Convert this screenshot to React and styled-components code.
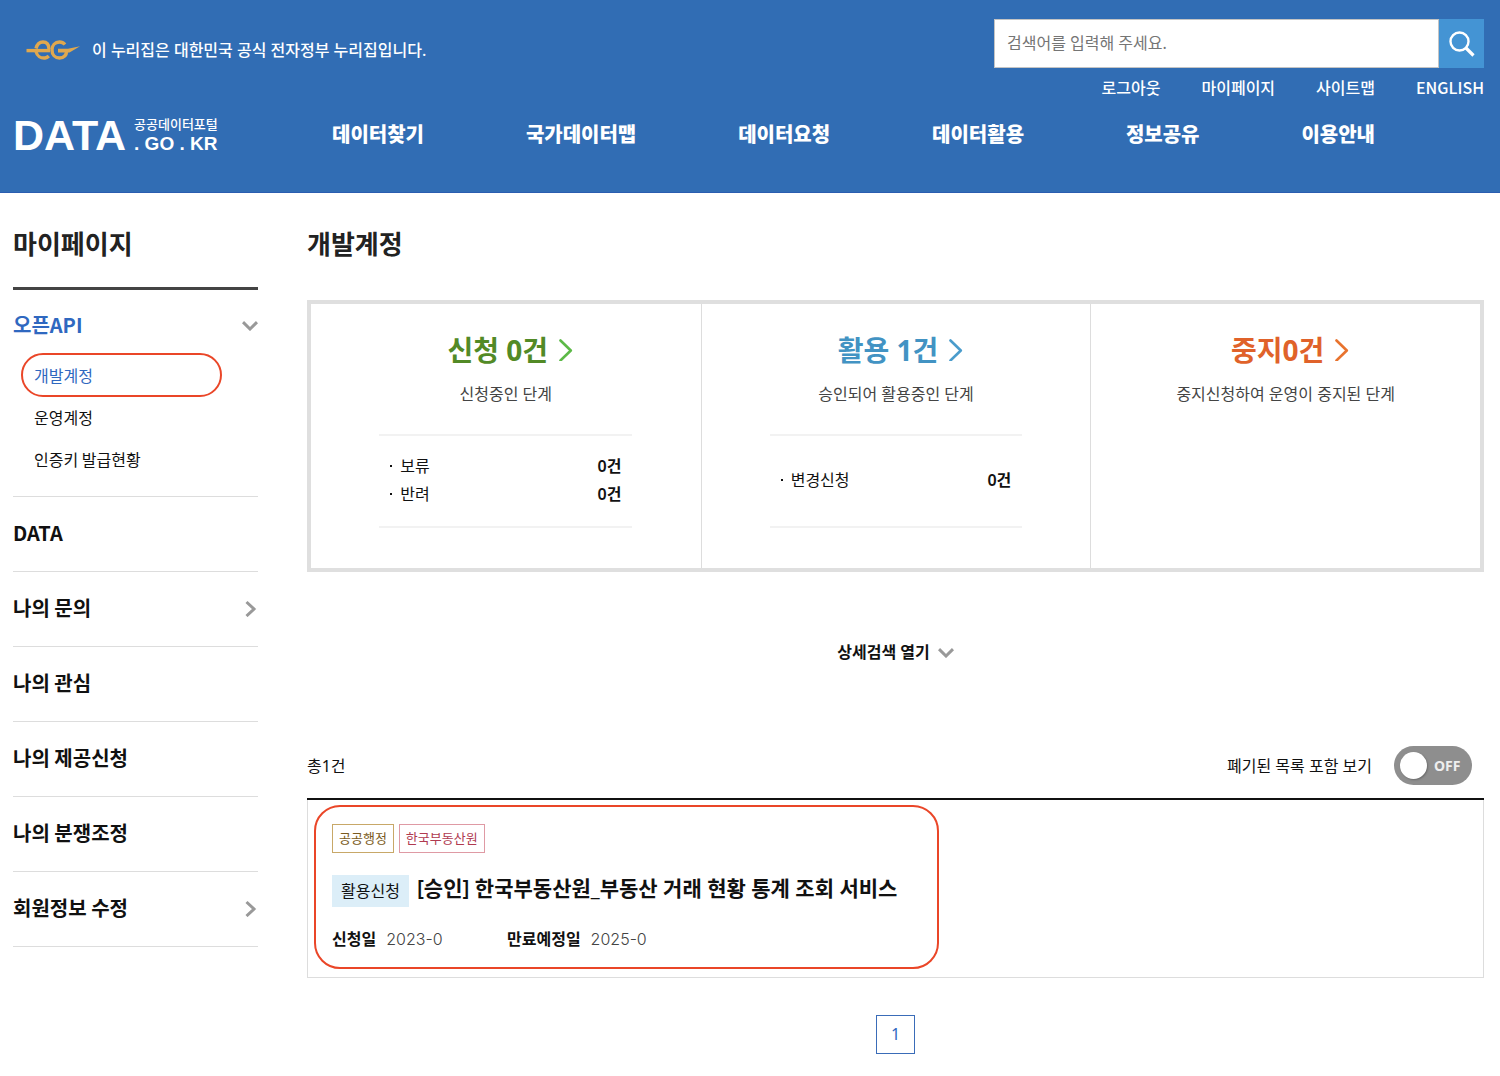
import styled, { createGlobalStyle } from 'styled-components';

const GlobalStyle = createGlobalStyle`
	* {
		box-sizing: border-box;
	}

	body {
		margin: 0;
		background-color: white;
		color: #111;
		font-family: 'Noto Sans', 'Noto Sans CJK KR', sans-serif;
		font-size: 16px;
		line-height: 24px;
	}

	h1, h2, h3, p, ul, dl, dd {
		margin: 0;
		padding: 0;
	}

	ul {
		list-style: none;
	}

	a {
		color: inherit;
		text-decoration: none;
	}

	button, input {
		font: inherit;
	}
`;

const App = () => {
	return (
		<>
			<GlobalStyle />
			<Header />
			<Page>
				<Sidebar />
				<Main />
			</Page>
		</>
	);
};

export default App;

/************************************************************* ICONS ****************************************************************************/

const ChevronRight = () => (
	<svg width='14' height='22' viewBox='0 0 14 22' fill='none' aria-hidden='true'>
		<path
			d='M1.5 1.500 L11.8 11.500 L1.5 21.500'
			stroke='currentColor'
			strokeWidth='2.6'
			strokeLinecap='round'
			strokeLinejoin='round'
		/>
	</svg>
);

const MenuArrow = () => (
	<svg width='13' height='18' viewBox='0 0 13 18' fill='none' aria-hidden='true'>
		<path d='M1.5 3 L9 10 L1.5 17' stroke='currentColor' strokeWidth='3' />
	</svg>
);

const ChevronDown = () => (
	<svg width='16' height='12' viewBox='0 0 16 12' fill='none' aria-hidden='true'>
		<path d='M1 3.2 L8 10 L15 3.2' stroke='currentColor' strokeWidth='3' />
	</svg>
);

const SearchIcon = () => (
	<svg width='26' height='26' viewBox='0 0 26 26' fill='none' aria-hidden='true'>
		<circle cx='10.5' cy='10.5' r='9' stroke='white' strokeWidth='2.4' />
		<path d='M17 17 L24.500 24.500' stroke='white' strokeWidth='3.2' />
	</svg>
);

const GovMark = () => (
	<svg width='54' height='20' viewBox='0 0 54 20' fill='none' aria-hidden='true'>
		<g stroke='#e0a84e' strokeWidth='3.4'>
			<path d='M0.5 10.6 H24' />
			<path d='M10 8.500 C11 4.500 13.500 2 17 2 C20.500 2 22.800 4 23 9' />
			<path d='M10 11.500 C11 16 15 18.400 19 18 C20.600 17.800 21.800 17 22.800 16' />
			<path d='M39 4.500 C37.500 2.800 35.500 2 33.500 2 C29 2 26 5.500 26 10 C26 14.500 29 18 33.500 18 C38 18 40.500 15 40.800 10.400' />
		</g>
		<path d='M32 8.800 H42 L54 6.200 L43.500 12.400 H32 Z' fill='#e0a84e' />
	</svg>
);

/************************************************************* HEADER ****************************************************************************/

const utilLinks = ['로그아웃', '마이페이지', '사이트맵', 'ENGLISH'];
const navLinks = ['데이터찾기', '국가데이터맵', '데이터요청', '데이터활용', '정보공유', '이용안내'];

const Header = () => {
	return (
		<HeaderBar>
			<HeaderTop>
				<GovNotice>
					<GovMark />
					이 누리집은 대한민국 공식 전자정부 누리집입니다.
				</GovNotice>
				<HeaderTools>
					<SearchForm onSubmit={(e) => e.preventDefault()}>
						<input type='text' aria-label='검색어' placeholder='검색어를 입력해 주세요.' />
						<button type='submit' aria-label='검색'>
							<SearchIcon />
						</button>
					</SearchForm>
					<UtilList>
						{utilLinks.map((link) => (
							<li key={link}>
								<a href='#'>{link}</a>
							</li>
						))}
					</UtilList>
				</HeaderTools>
			</HeaderTop>
			<HeaderBottom>
				<Logo href='#'>
					<span className='name'>DATA</span>
					<span className='side'>
						<span className='portal'>공공데이터포털</span>
						<span className='domain'>. GO . KR</span>
					</span>
				</Logo>
				<Nav>
					{navLinks.map((link) => (
						<a key={link} href='#'>
							{link}
						</a>
					))}
				</Nav>
			</HeaderBottom>
		</HeaderBar>
	);
};

const HeaderBar = styled.header`
	padding: 19px 16px 28px 13px;
	background-color: #316db4;
	border-bottom: 1px solid #2a5db0;
	color: white;
`;

const HeaderTop = styled.div`
	display: flex;
	justify-content: space-between;
`;

const GovNotice = styled.p`
	display: flex;
	align-items: center;
	gap: 12px;
	height: 62px;
	padding-left: 13px;
	font-weight: 500;
`;

const HeaderTools = styled.div`
	width: 33%;
	min-width: 490px;
`;

const SearchForm = styled.form`
	display: flex;
	height: 49px;

	& > input {
		flex: 1;
		min-width: 0;
		padding: 0 12px 2px;
		border: 1px solid #c4c4c4;
		border-radius: 0;
		background-color: white;
		outline: none;

		&::placeholder {
			color: #757575;
			opacity: 1;
		}
	}

	& > button {
		display: flex;
		align-items: center;
		justify-content: center;
		width: 45px;
		padding: 0;
		border: none;
		background-color: #4494d4;
		cursor: pointer;
	}
`;

const UtilList = styled.ul`
	display: flex;
	justify-content: flex-end;
	gap: 41px;
	font-family: 'Noto Sans CJK KR', sans-serif;
	line-height: 38px;
	font-weight: 500;
`;

const HeaderBottom = styled.div`
	display: flex;
	align-items: center;
	height: 58px;
`;

const Logo = styled.a`
	display: flex;
	align-items: center;
	gap: 8px;
	width: 319px;
	font-family: 'Liberation Sans', 'Noto Sans CJK KR', sans-serif;
	font-weight: 700;

	& > .name {
		font-size: 43px;
		line-height: 48px;
	}

	& > .side {
		display: flex;
		flex-direction: column;
	}

	& .portal {
		font-size: 13px;
		line-height: 18px;
		font-weight: 500;
	}

	& .domain {
		font-size: 19px;
		line-height: 20px;
	}
`;

const Nav = styled.nav`
	display: flex;
	flex: 1;
	justify-content: space-between;
	padding-right: 109px;
	font-size: 20px;
	font-weight: 800;
`;

/************************************************************* SIDEBAR ****************************************************************************/

const Page = styled.div`
	display: flex;
	gap: 49px;
	padding: 31px 16px 22px 13px;
`;

const menuItems = [
	{ label: 'DATA' },
	{ label: '나의 문의', arrow: true },
	{ label: '나의 관심' },
	{ label: '나의 제공신청' },
	{ label: '나의 분쟁조정' },
	{ label: '회원정보 수정', arrow: true },
];

const Sidebar = () => {
	return (
		<SidebarBox>
			<PageTitle as='h2'>마이페이지</PageTitle>
			<Menu>
				<OpenGroup>
					<a className='head' href='#'>
						오픈API
						<ChevronDown />
					</a>
					<ul>
						<SubItem $active>
							<a href='#'>개발계정</a>
						</SubItem>
						<SubItem>
							<a href='#'>운영계정</a>
						</SubItem>
						<SubItem>
							<a href='#'>인증키 발급현황</a>
						</SubItem>
					</ul>
				</OpenGroup>
				{menuItems.map(({ label, arrow }) => (
					<MenuItem key={label}>
						<a href='#'>
							{label}
							{arrow && <MenuArrow />}
						</a>
					</MenuItem>
				))}
			</Menu>
		</SidebarBox>
	);
};

const SidebarBox = styled.aside`
	flex: none;
	width: 245px;
`;

const PageTitle = styled.h1`
	color: #222;
	font-size: 26px;
	font-weight: 700;
	line-height: 40px;
`;

const Menu = styled.ul`
	margin-top: 23px;
	border-top: 3px solid #444;
	font-family: 'Noto Sans CJK KR', sans-serif;
	font-size: 20px;
	font-weight: 600;

	& svg {
		color: #999;
	}
`;

const OpenGroup = styled.li`
	padding-bottom: 16px;
	border-bottom: 1px solid #ddd;

	& > .head {
		display: flex;
		align-items: center;
		justify-content: space-between;
		padding: 20px 0 14px;
		color: #2f68c0;
		line-height: 30px;
	}
`;

const SubItem = styled.li`
	position: relative;
	padding-left: 21px;
	color: ${({ $active }) => ($active ? '#2f68c0' : '#111')};
	font-size: 16px;
	font-weight: 400;
	line-height: 42px;

	&::after {
		content: '';
		display: ${({ $active }) => ($active ? 'block' : 'none')};
		position: absolute;
		inset: -1px 36px -1px 8px;
		border: 2px solid #ea4628;
		border-radius: 22px;
		pointer-events: none;
	}
`;

const MenuItem = styled.li`
	border-bottom: 1px solid #ddd;

	& > a {
		display: flex;
		align-items: center;
		justify-content: space-between;
		height: 74px;
		padding-bottom: 2px;
	}
`;

/************************************************************* MAIN ****************************************************************************/

const summary = [
	{
		title: '신청 0건',
		color: '#528a26',
		arrow: '#5cb947',
		text: '신청중인 단계',
		rows: ['보류', '반려'],
	},
	{
		title: '활용 1건',
		color: '#4293c3',
		arrow: '#4a9ccc',
		text: '승인되어 활용중인 단계',
		rows: ['변경신청'],
	},
	{
		title: '중지0건',
		color: '#e0622a',
		arrow: '#e8732e',
		text: '중지신청하여 운영이 중지된 단계',
		rows: [],
	},
];

const Main = () => {
	return (
		<MainBox>
			<PageTitle>개발계정</PageTitle>
			<Summary>
				{summary.map(({ title, color, arrow, text, rows }) => (
					<SummaryCell key={title}>
						<SummaryLink href='#' $color={color} $arrow={arrow}>
							{title}
							<ChevronRight />
						</SummaryLink>
						<p>{text}</p>
						{rows.length > 0 && (
							<SummaryRows>
								{rows.map((row) => (
									<li key={row}>
										<span>{row}</span>
										<strong>0건</strong>
									</li>
								))}
							</SummaryRows>
						)}
					</SummaryCell>
				))}
			</Summary>
			<DetailButton type='button'>
				상세검색 열기
				<ChevronDown />
			</DetailButton>
			<ListHead>
				<p>총1건</p>
				<Toggle>
					폐기된 목록 포함 보기
					<input type='checkbox' />
					<span className='switch'>OFF</span>
				</Toggle>
			</ListHead>
			<ListItem>
				<ItemBody>
					<Tags>
						<Tag $color='#7a5a20' $border='#c8a868'>
							공공행정
						</Tag>
						<Tag $color='#b03a50' $border='#df9aa4'>
							한국부동산원
						</Tag>
					</Tags>
					<ItemTitle href='#'>
						<span>활용신청</span>
						<h3>[승인] 한국부동산원_부동산 거래 현황 통계 조회 서비스</h3>
					</ItemTitle>
					<Dates>
						<div>
							<dt>신청일</dt>
							<dd>2023-0</dd>
						</div>
						<div>
							<dt>만료예정일</dt>
							<dd>2025-0</dd>
						</div>
					</Dates>
				</ItemBody>
			</ListItem>
			<Pagination aria-label='페이지'>
				<a href='#' aria-current='page'>
					1
				</a>
			</Pagination>
		</MainBox>
	);
};

const MainBox = styled.main`
	display: flex;
	flex: 1;
	flex-direction: column;
	min-width: 0;
`;

const Summary = styled.section`
	display: grid;
	grid-template-columns: repeat(3, 1fr);
	margin-top: 36px;
	border: 4px solid #dfdfdf;
`;

const SummaryCell = styled.div`
	display: flex;
	flex-direction: column;
	align-items: center;
	min-height: 264px;
	padding: 26px 0 40px;

	& + & {
		border-left: 1px solid #ddd;
	}

	& > p {
		margin-top: 12px;
		color: #444;
	}
`;

const SummaryLink = styled.a`
	display: flex;
	align-items: center;
	gap: 11px;
	padding-left: 9px;
	color: ${({ $color }) => $color};
	font-size: 28px;
	font-weight: 700;
	line-height: 40px;

	& > svg {
		color: ${({ $arrow }) => $arrow};
	}
`;

const SummaryRows = styled.ul`
	display: flex;
	flex-direction: column;
	justify-content: center;
	width: 65%;
	height: 94px;
	margin-top: 28px;
	padding: 0 11px 3px;
	border: solid #f2f2f2;
	border-width: 2px 0;
	line-height: 28px;

	& > li {
		display: flex;
		align-items: center;
		gap: 8px;
	}

	& > li::before {
		content: '';
		width: 2px;
		height: 2px;
		background-color: #111;
	}

	& strong {
		margin-left: auto;
		font-weight: 600;
	}
`;

const DetailButton = styled.button`
	display: flex;
	align-items: center;
	align-self: center;
	gap: 8px;
	margin: 68px 0 82px;
	padding: 0;
	border: none;
	background: none;
	color: #111;
	font-weight: 600;
	cursor: pointer;

	& > svg {
		color: #999;
	}
`;

const ListHead = styled.div`
	display: flex;
	align-items: center;
	justify-content: space-between;
	padding: 0 12px 13px 0;
	border-bottom: 2px solid #111;
`;

const Toggle = styled.label`
	display: flex;
	align-items: center;
	cursor: pointer;

	& > input {
		position: absolute;
		opacity: 0;
	}

	& > .switch {
		display: flex;
		align-items: center;
		gap: 7px;
		width: 78px;
		height: 39px;
		margin-left: 22px;
		padding-left: 6px;
		border-radius: 20px;
		background-color: #8e8e8e;
		color: #eee;
		font-size: 14px;
		font-weight: 700;
	}

	& > .switch::before {
		content: '';
		width: 27px;
		height: 27px;
		border-radius: 50%;
		background-color: white;
		box-shadow: 1px 1px 2px rgba(0, 0, 0, 0.25);
	}
`;

const ListItem = styled.article`
	padding: 5px 6px 8px;
	border: 1px solid #ddd;
	border-top: none;
`;

const ItemBody = styled.div`
	width: fit-content;
	min-width: 625px;
	padding: 17px 40px 16px 16px;
	border: 2px solid #ea4628;
	border-radius: 26px;
`;

const Tags = styled.div`
	display: flex;
	gap: 5px;
`;

const Tag = styled.span`
	padding: 0 6px;
	border: 1px solid ${({ $border }) => $border};
	color: ${({ $color }) => $color};
	font-size: 13px;
	line-height: 27px;
`;

const ItemTitle = styled.a`
	display: flex;
	align-items: flex-start;
	gap: 8px;
	margin-top: 22px;

	& > span {
		padding: 0 9px;
		background-color: #dceef8;
		line-height: 32px;
	}

	& > h3 {
		font-size: 21px;
		font-weight: 600;
		line-height: 27px;
	}
`;

const Dates = styled.dl`
	display: flex;
	margin-top: 20px;

	& > div {
		display: flex;
		gap: 10px;
		min-width: 175px;
	}

	& dt {
		font-weight: 600;
	}

	& dd {
		color: #444;
		font-family: Inter, sans-serif;
		font-weight: 300;
	}
`;

const Pagination = styled.nav`
	display: flex;
	justify-content: center;
	margin-top: 37px;

	& > a {
		width: 39px;
		border: 1px solid #3a6cb8;
		color: #2f68c0;
		line-height: 37px;
		text-align: center;
	}
`;
